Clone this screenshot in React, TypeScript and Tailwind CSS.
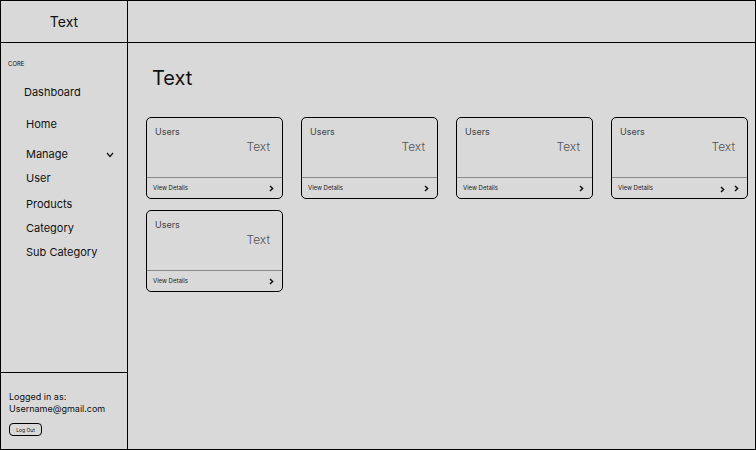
import React from "react";

function Chevron() {
  return (
    <svg width="5" height="7" viewBox="0 0 5 7" className="block">
      <path d="M1 1 L3.6 3.5 L1 6" fill="none" stroke="#111" strokeWidth="1.5" />
    </svg>
  );
}

function Card({ double }: { double?: boolean }) {
  return (
    <div className="w-[137px] h-[82px] border border-black rounded-[5px] flex flex-col">
      <div className="h-[59px] flex flex-col px-[8px] pt-[8px]">
        <div className="text-[9px] leading-[12px] text-[#444]">Users</div>
        <div className="mt-[2px] text-[12px] leading-[14px] text-[#555] font-light text-right pr-[4px]">Text</div>
      </div>
      <div className="flex-1 border-t border-[#8a8a8a] flex items-center justify-between pl-[6px] pr-[8px]">
        <span className="text-[6px] leading-[8px] text-[#222]">View Details</span>
        {double ? (
          <div className="flex items-center gap-[9px]">
            <span className="mt-[3px]"><Chevron /></span>
            <Chevron />
          </div>
        ) : (
          <Chevron />
        )}
      </div>
    </div>
  );
}

export default function App() {
  return (
    <div
      className="w-[756px] h-[450px] border border-black bg-[#d9d9d9] flex flex-col text-[#111]"
      style={{ fontFamily: "Inter, 'Noto Sans', sans-serif" }}
    >
      <div className="h-[42px] border-b border-black flex shrink-0">
        <div className="w-[127px] border-r border-black flex items-center justify-center text-[14px]">Text</div>
        <div className="flex-1" />
      </div>
      <div className="flex-1 flex min-h-0">
        <div className="w-[127px] border-r border-black flex flex-col shrink-0">
          <div className="flex-1 pt-[17px] flex flex-col">
            <div className="text-[6px] leading-[8px] pl-[7px]">CORE</div>
            <div className="mt-[17px] text-[11px] leading-[14px] pl-[23px]">Dashboard</div>
            <div className="mt-[18px] text-[11px] leading-[14px] pl-[25px]">Home</div>
            <div className="mt-[16px] text-[11px] leading-[14px] pl-[25px] pr-[13px] flex items-center justify-between">
              <span>Manage</span>
              <svg width="8" height="6" viewBox="0 0 8 6" className="mt-[2px]">
                <path d="M1 1 L4 4.5 L7 1" fill="none" stroke="#111" strokeWidth="1.2" />
              </svg>
            </div>
            <div className="mt-[10px] text-[11px] leading-[14px] pl-[25px]">User</div>
            <div className="mt-[12px] text-[11px] leading-[14px] pl-[25px]">Products</div>
            <div className="mt-[10px] text-[11px] leading-[14px] pl-[25px]">Category</div>
            <div className="mt-[10px] text-[11px] leading-[14px] pl-[25px]">Sub Category</div>
          </div>
          <div className="h-[77px] border-t border-black px-[8px] pt-[18px] flex flex-col items-start shrink-0">
            <div className="text-[9px] leading-[12px]">Logged in as:</div>
            <div className="text-[9px] leading-[12px]">Username@gmail.com</div>
            <div className="mt-[8px] w-[33px] h-[13px] border border-black rounded-[4px] flex items-center justify-center text-[5px] leading-[6px]">
              Log Out
            </div>
          </div>
        </div>
        <div className="flex-1 pl-[18px] pt-[23px]">
          <div className="ml-[6px] text-[20px] leading-[24px]">Text</div>
          <div className="mt-[27px] grid grid-cols-[repeat(4,137px)] gap-x-[18px] gap-y-[11px]">
            <Card />
            <Card />
            <Card />
            <Card double />
            <Card />
          </div>
        </div>
      </div>
    </div>
  );
}
